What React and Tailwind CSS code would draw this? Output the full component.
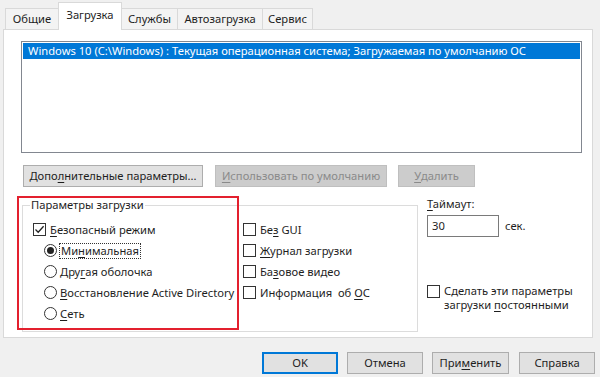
import React from 'react'

const K = ({ children }) => <span className="underline underline-offset-[2px] decoration-1">{children}</span>

const CheckBox = ({ checked }) => (
  <span className="w-[13px] h-[13px] border border-[#333] bg-white flex items-center justify-center shrink-0">
    {checked && (
      <svg width="11" height="11" viewBox="0 0 11 11">
        <path d="M1.5 5.5 L4.2 8.2 L9.6 2.2" stroke="#222" strokeWidth="1.3" fill="none" />
      </svg>
    )}
  </span>
)

const Radio = ({ checked }) => (
  <span className="w-[13px] h-[13px] rounded-full border border-[#333] bg-white flex items-center justify-center shrink-0">
    {checked && <span className="w-[7px] h-[7px] rounded-full bg-[#222]" />}
  </span>
)

const Btn = ({ children, w, disabled, focused, className = '' }) => (
  <div
    className={`${w} h-[22px] flex items-center justify-center whitespace-nowrap border ${
      disabled
        ? 'bg-[#cccccc] border-[#bfbfbf] text-[#8a8a8a]'
        : focused
        ? 'bg-[#e1e1e1] border-[#0078d7] outline outline-1 outline-[#0078d7] -outline-offset-2'
        : 'bg-[#e1e1e1] border-[#adadad]'
    } ${className}`}
  >
    {children}
  </div>
)

const Tab = ({ children, w, active }) => (
  <div
    className={`${w} -ml-px first:ml-0 flex items-center justify-center border border-b-0 border-[#d9d9d9] ${
      active ? 'h-[28px] bg-white relative z-10 -mb-px pb-[3px]' : 'h-[21px] bg-[#f3f3f3]'
    }`}
  >
    {children}
  </div>
)

const Row = ({ children, className = '' }) => (
  <div className={`h-[21px] flex items-center ${className}`}>{children}</div>
)

export default function App() {
  return (
    <div className="w-[600px] h-[377px] overflow-hidden bg-[#f0f0f0] text-[11.2px] leading-[16px] text-[#1e1e1e] font-['Noto_Sans',sans-serif]">
      {/* tabs */}
      <div className="h-[29px] flex items-end pl-[5px]">
        <Tab w="w-[54px]">Общие</Tab>
        <Tab w="w-[64px]" active>Загрузка</Tab>
        <Tab w="w-[57px]">Службы</Tab>
        <Tab w="w-[86px]">Автозагрузка</Tab>
        <Tab w="w-[51px]">Сервис</Tab>
      </div>

      {/* tab panel */}
      <div className="mx-[3px] w-[590px] h-[309px] bg-white border border-[#d9d9d9]">
        <div className="ml-[17px] mt-[11px] w-[561px] h-[112px] border border-[#828790] bg-white p-px">
          <div className="h-[16px] bg-[#0078d7] text-white pl-[5px] flex items-center whitespace-nowrap">
            Windows 10 (C:\Windows) : Текущая операционная система; Загружаемая по умолчанию ОС
          </div>
        </div>

        <div className="ml-[19px] mt-[12px] flex">
          <Btn w="w-[180px]">
            Допо<K>л</K>нительные параметры...
          </Btn>
          <Btn w="w-[172px]" disabled className="ml-[12px]">
            <K>И</K>спользовать по умолчанию
          </Btn>
          <Btn w="w-[77px]" disabled className="ml-[11px]">
            <K>У</K>далить
          </Btn>
        </div>

        <div className="mt-[9px] flex items-start">
          {/* boot options group */}
          <fieldset className="relative ml-[18px] mt-[1px] w-[396px] h-[135px] border border-[#dcdcdc]">
            <legend className="ml-[7px] px-[1px] leading-[16px]">Параметры загрузки</legend>
            <div className="pl-[10px] pt-[5px] flex">
              <div className="w-[210px]">
                <Row className="mt-[1px]">
                  <CheckBox checked />
                  <span className="ml-[4px]">
                    <K>Б</K>езопасный режим
                  </span>
                </Row>
                <Row className="ml-[11px]">
                  <Radio checked />
                  <span className="ml-[2px] px-[1px] border border-dotted border-[#333] leading-[14px]">
                    Ми<K>н</K>имальная
                  </span>
                </Row>
                <Row className="ml-[11px]">
                  <Radio />
                  <span className="ml-[3px]">
                    Дру<K>г</K>ая оболочка
                  </span>
                </Row>
                <Row className="ml-[11px]">
                  <Radio />
                  <span className="ml-[3px] whitespace-nowrap">
                    <K>В</K>осстановление Active Directory
                  </span>
                </Row>
                <Row className="ml-[11px]">
                  <Radio />
                  <span className="ml-[3px]">
                    <K>С</K>еть
                  </span>
                </Row>
              </div>
              <div>
                <Row className="mt-[1px]">
                  <CheckBox />
                  <span className="ml-[4px]">
                    Бе<K>з</K> GUI
                  </span>
                </Row>
                <Row>
                  <CheckBox />
                  <span className="ml-[4px]">
                    <K>Ж</K>урнал загрузки
                  </span>
                </Row>
                <Row>
                  <CheckBox />
                  <span className="ml-[4px]">
                    Ба<K>з</K>овое видео
                  </span>
                </Row>
                <Row>
                  <CheckBox />
                  <span className="ml-[4px] whitespace-pre">
                    Информация  об <K>О</K>С
                  </span>
                </Row>
              </div>
            </div>
            {/* red highlight frame */}
            <div className="absolute left-[-6px] top-[-17px] w-[222px] h-[134px] border-2 border-[#e3202e] pointer-events-none" />
          </fieldset>

          {/* timeout column */}
          <div className="ml-[9px] w-[160px]">
            <div>
              <K>Т</K>аймаут:
            </div>
            <div className="mt-[3px] flex items-center">
              <div className="w-[72px] h-[22px] border border-[#7a7a7a] bg-white pl-[4px] flex items-center">30</div>
              <span className="ml-[6px]">сек.</span>
            </div>
            <div className="mt-[48px] flex items-start">
              <CheckBox />
              <span className="ml-[4px] leading-[14px] -mt-[1px]">
                Сделать эти параметры
                <br />
                загрузки <K>п</K>остоянными
              </span>
            </div>
          </div>
        </div>
      </div>

      {/* dialog buttons */}
      <div className="mt-[14px] flex justify-end pr-[5px]">
        <Btn w="w-[76px]" focused>OK</Btn>
        <Btn w="w-[76px]" className="ml-[9px]">Отмена</Btn>
        <Btn w="w-[77px]" className="ml-[9px]">
          При<K>м</K>енить
        </Btn>
        <Btn w="w-[76px]" className="ml-[10px]">Справка</Btn>
      </div>
    </div>
  )
}
